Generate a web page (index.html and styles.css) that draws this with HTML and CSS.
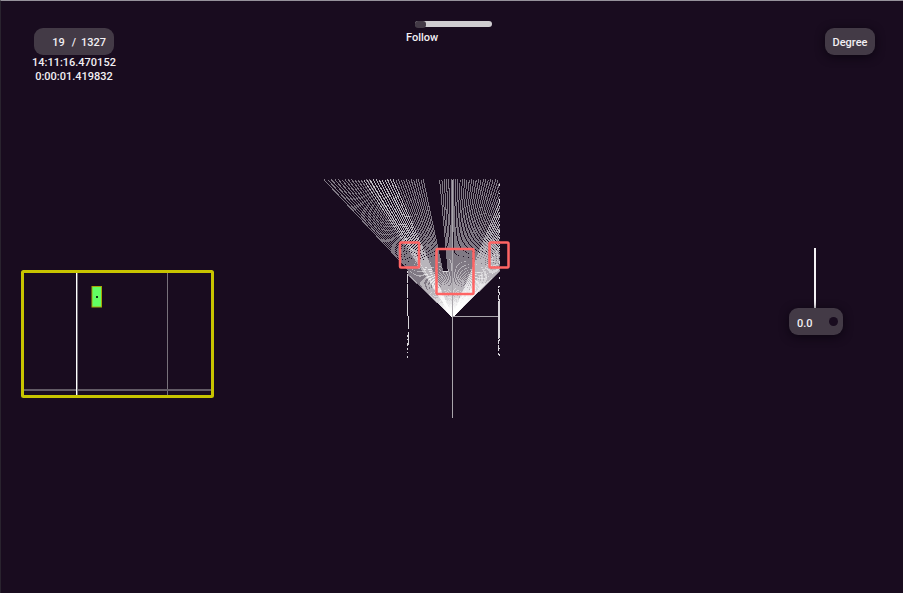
FILE: index.html
```html
<!DOCTYPE html>
<html lang="en">
<head>
<meta charset="utf-8">
<meta name="viewport" content="width=device-width, initial-scale=1">
<title>Scan viewer</title>
<link rel="stylesheet" href="styles.css">
</head>
<body>
<header class="toolbar">
  <section class="playback">
    <div class="pill counter">
      <input class="frame" type="text" value="19" aria-label="Frame">
      <span class="slash">/</span>
      <span>1327</span>
    </div>
    <time class="stamp">14:11:16.470152</time>
    <time class="stamp">0:00:01.419832</time>
  </section>
  <section class="follow">
    <input class="slider" id="follow" type="range" min="0" max="10" value="0">
    <label for="follow">Follow</label>
  </section>
  <button class="pill degree" type="button">Degree</button>
</header>
<main class="workspace">
  <svg class="map" viewBox="21 270 193 128" role="img" aria-label="Map">
    <path d="M167.500 272V396" stroke="#77717a"/>
    <path d="M23 390H212" stroke="#625b65" stroke-width="2"/>
    <path d="M77.500 272V396" stroke="#77717a"/>
    <path d="M76.500 272V396" stroke="#fff"/>
    <rect x="92" y="286.500" width="9.500" height="20.500" fill="#62ff62" stroke="#a6a708"/>
    <rect x="96" y="296" width="2" height="2" fill="#14351a"/>
    <rect x="22.500" y="271.500" width="190" height="125" rx="1" fill="none" stroke="#c8c400" stroke-width="3"/>
  </svg>
  <svg class="scan" viewBox="322 178 260 242" role="img" aria-label="Range scan">
    <g id="rays" class="rays"></g>
    <g class="axes">
      <path d="M452.500 180V418M453 316.500H499"/>
    </g>
    <g class="walls">
      <path d="M407.500 271V316" stroke-dasharray="2 1 9 1 14 1 30"/>
      <path d="M408.500 316V329M408.500 332V348" stroke-dasharray="13 3 1 1 3 1 2 1 4 1"/>
      <path d="M407.500 335V358" stroke-dasharray="2 2 1 3 3 2"/>
      <path d="M498.500 286V356" stroke-dasharray="2 1 4 2 5 1 38 1 4 1 6 2"/>
      <path d="M499.500 184V356" stroke-dasharray="2 7 1 5 3 4 1 8"/>
      <path d="M499.500 300V338M443 271.500H448"/>
    </g>
    <g class="targets">
      <rect x="400" y="242.500" width="19" height="25" rx="1"/>
      <rect x="436.500" y="249" width="37" height="45" rx="1"/>
      <rect x="489.500" y="242.500" width="19" height="25" rx="1"/>
    </g>
  </svg>
  <section class="tilt">
    <span class="stem"></span>
    <div class="pill tilt-box">
      <input class="value" type="text" value="0.0" aria-label="Angle">
      <input class="knob" type="checkbox" aria-label="Lock angle">
    </div>
  </section>
</main>
<script src="scan.js"></script>
</body>
</html>
```
FILE: styles.css
```css
* {
  box-sizing: border-box;
}

body {
  margin: 0;
  min-height: 100vh;
  border-top: 1px solid #96929b;
  border-left: 1px solid #29232e;
  background: #190c1f;
  color: #f2eff3;
  font: 500 11px/14px Roboto, "Liberation Sans", sans-serif;
}

input,
button {
  margin: 0;
  padding: 0;
  border: 0;
  background: none;
  color: inherit;
  font: inherit;
}

.toolbar,
.workspace {
  display: grid;
  grid-template-columns: 1fr auto 1fr;
  align-items: start;
}

.toolbar {
  padding: 20px 28px 0 28px;
}

.pill {
  display: flex;
  align-items: center;
  height: 27px;
  padding-top: 2px;
  border-radius: 9px;
  background: #433a46;
}

.playback {
  display: flex;
  flex-direction: column;
  align-items: center;
  justify-self: start;
  margin: 7px 0 0 3px;
}

.counter {
  gap: 5px;
  margin-bottom: 1px;
  padding-right: 8px;
  padding-left: 7px;
}

.frame {
  width: 24px;
  text-align: right;
}

.slash {
  margin-left: 2px;
}

.follow {
  display: flex;
  flex-direction: column;
  gap: 4px;
  width: 92px;
}

.slider {
  appearance: none;
  width: 77px;
  height: 6px;
  margin-left: 9px;
  border-radius: 3px;
  background: #cfcdd0;
}

.slider::-webkit-slider-thumb {
  appearance: none;
  width: 11px;
  height: 7px;
  border-radius: 3px;
  background: #433a46;
}

.degree {
  justify-self: end;
  justify-content: center;
  width: 50px;
  margin-top: 7px;
  box-shadow: 0 2px 10px #0c0511;
}

.workspace {
  margin-top: 94px;
}

.map {
  width: 193px;
  height: 128px;
  margin: 92px 0 0 20px;
}

.scan {
  width: 260px;
  height: 242px;
  fill: none;
}

.rays {
  stroke: #fff;
  stroke-opacity: 0.45;
  shape-rendering: crispEdges;
}

.axes {
  stroke: #a9a5ab;
}

.walls {
  stroke: #d8d5da;
}

.targets {
  stroke: #ff6464;
  stroke-width: 2.5;
}

.tilt {
  display: flex;
  flex-direction: column;
  align-items: center;
  justify-self: end;
  margin: 70px 60px 0 0;
}

.stem {
  width: 2px;
  height: 60px;
  margin-right: 2px;
  background: #f4f2f5;
}

.tilt-box {
  justify-content: space-between;
  width: 54px;
  padding: 0 5px 0 8px;
  box-shadow: 0 2px 10px #0c0511;
}

.value {
  width: 24px;
  padding-top: 4px;
}

.knob {
  appearance: none;
  width: 9px;
  height: 9px;
  border-radius: 50%;
  background: #190c1f;
}
```
FILE: scan.js
```javascript
const origin = { x: 452.5, y: 317 };
const ceiling = 179.5;
const wall = 499.5;
const group = document.getElementById("rays");

function ray(x, y) {
  const line = document.createElementNS("http://www.w3.org/2000/svg", "line");
  line.setAttribute("x1", origin.x);
  line.setAttribute("y1", origin.y);
  line.setAttribute("x2", x);
  line.setAttribute("y2", y);
  group.appendChild(line);
}

function cast(deg) {
  const slope = Math.tan(deg * Math.PI / 180);
  let y = ceiling;
  let x = origin.x + slope * (origin.y - y);
  if (deg < -43.4) {
    x = 408;
    y = origin.y + (origin.x - x) / slope;
  } else if (deg > -12 && deg < -6) {
    y = 272;
    x = origin.x + slope * (origin.y - y);
  } else if (x > wall) {
    x = wall;
    y = origin.y - (wall - origin.x) / slope;
  }
  ray(x, y);
}

for (let deg = -46.5; deg < -31; deg += 0.85) cast(deg);
for (let deg = -31; deg <= 45.5; deg += 0.95) cast(deg);
for (let deg = -33; deg < -23; deg += 0.95) cast(deg + 0.1);
for (let deg = 22; deg < 34; deg += 0.95) cast(deg + 0.3);
for (let deg = 34; deg <= 46; deg += 0.7) cast(deg);
```
